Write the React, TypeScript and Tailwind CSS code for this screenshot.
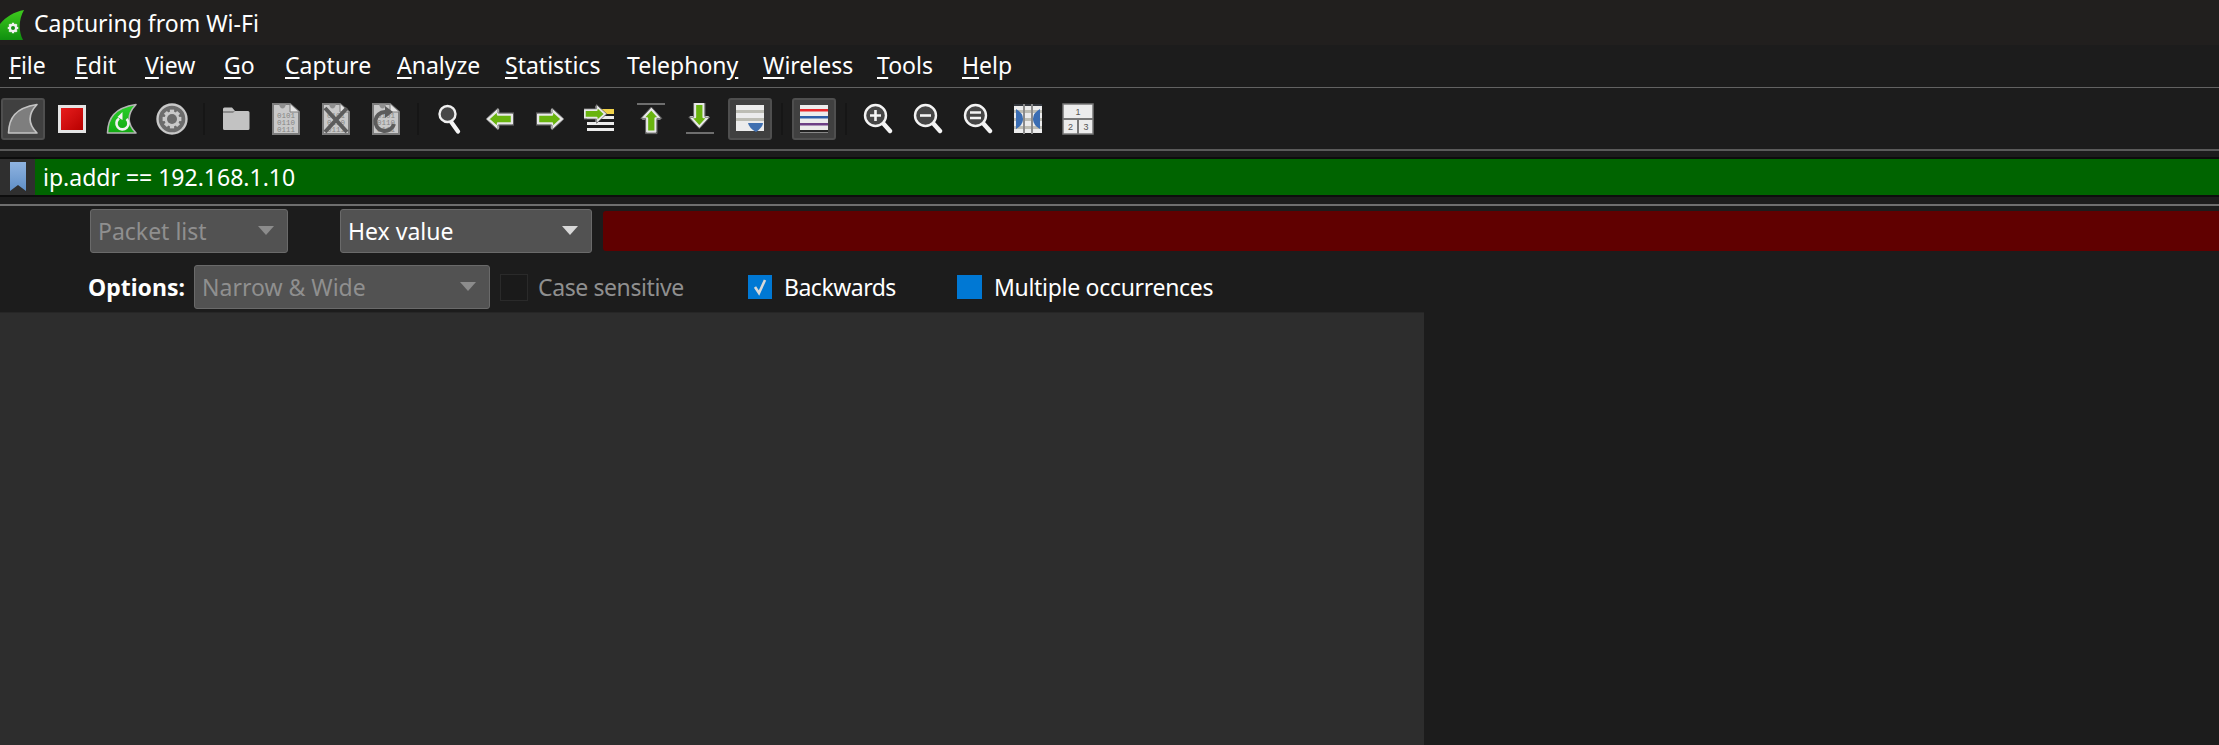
import type { ReactNode } from "react";

const FONT = "font-['Noto_Sans','Open_Sans',sans-serif]";

const MENUS: { label: string; key: number; width: string }[] = [
  { label: "File", key: 0, width: "w-[66px]" },
  { label: "Edit", key: 0, width: "w-[70px]" },
  { label: "View", key: 0, width: "w-[79px]" },
  { label: "Go", key: 0, width: "w-[61px]" },
  { label: "Capture", key: 0, width: "w-[112px]" },
  { label: "Analyze", key: 0, width: "w-[108px]" },
  { label: "Statistics", key: 0, width: "w-[122px]" },
  { label: "Telephony", key: 8, width: "w-[136px]" },
  { label: "Wireless", key: 0, width: "w-[114px]" },
  { label: "Tools", key: 0, width: "w-[85px]" },
  { label: "Help", key: 0, width: "w-[60px]" },
];

function Fin({ fill, stroke }: { fill: string; stroke: string }) {
  return (
    <path
      d="M1.5 30 C2 15 8 5 30 1.5 C21 11 21 21 30 30 Z"
      fill={fill}
      stroke={stroke}
      strokeWidth="1.6"
      strokeLinejoin="round"
    />
  );
}

function Icon({ children, w = 32, h = 32 }: { children: ReactNode; w?: number; h?: number }) {
  return (
    <svg width={w} height={h} viewBox={`0 0 ${w} ${h}`} className="block">
      {children}
    </svg>
  );
}

function GearPath({ cx, cy, r, fill }: { cx: number; cy: number; r: number; fill: string }) {
  const teeth = [0, 45, 90, 135];
  return (
    <g>
      {teeth.map((a) => (
        <rect
          key={a}
          x={cx - r * 0.28}
          y={cy - r * 1.25}
          width={r * 0.56}
          height={r * 2.5}
          fill={fill}
          transform={`rotate(${a} ${cx} ${cy})`}
        />
      ))}
      <circle cx={cx} cy={cy} r={r} fill={fill} />
    </g>
  );
}

function FileBase({ children }: { children?: ReactNode }) {
  return (
    <>
      <path d="M3 1 H20 L29 9 V31 H3 Z" fill="#c9c9c9" stroke="#7c7c7c" strokeWidth="2" />
      <path d="M20 1 V9 H29" fill="#e6e6e6" stroke="#7c7c7c" strokeWidth="1" />
      <path d="M9 1 C10 7 15 7 16 1 Z" fill="#8f8f8f" />
      <text x="16" y="15" textAnchor="middle" fontSize="7.5" fontFamily="Liberation Mono" fill="#858585">0101</text>
      <text x="16" y="22" textAnchor="middle" fontSize="7.5" fontFamily="Liberation Mono" fill="#858585">0110</text>
      <text x="16" y="29" textAnchor="middle" fontSize="7.5" fontFamily="Liberation Mono" fill="#858585">0111</text>
      {children}
    </>
  );
}

function Lens({ inner, children }: { inner: string; children?: ReactNode }) {
  return (
    <>
      <path d="M19 19 L27 28" stroke="#f4f4f4" strokeWidth="4.4" strokeLinecap="round" />
      <circle cx="12.5" cy="12.5" r="10.5" fill={inner} stroke="#f4f4f4" strokeWidth="2.4" />
      {children}
    </>
  );
}

function Arrow({ rotate = 0 }: { rotate?: number }) {
  return (
    <g transform={`rotate(${rotate} 14 14)`}>
      <path
        d="M2 14 L12 5 V9.5 H26 V18.5 H12 V23 Z"
        fill="#69b40f"
        stroke="#e8e8e8"
        strokeWidth="2.4"
        strokeLinejoin="round"
      />
      <path
        d="M0 14 L12 3 V8 H28 V20 H12 V25 Z"
        fill="none"
        stroke="#6e6e6e"
        strokeWidth="1"
        strokeLinejoin="round"
      />
    </g>
  );
}

function Tool({ children, active, wide }: { children: ReactNode; active?: boolean; wide?: boolean }) {
  return (
    <div className={`flex h-[42px] shrink-0 items-center justify-center ${wide ? "w-[47px] justify-start pl-px" : "w-[50px]"}`}>
      {active ? (
        <div className="flex h-[42px] w-[44px] items-center justify-center rounded-[3px] border-2 border-[#4f4f4f] bg-[#404040]">
          {children}
        </div>
      ) : (
        children
      )}
    </div>
  );
}

function Sep() {
  return (
    <div className="flex w-[14px] shrink-0 justify-center">
      <div className="h-[32px] w-[2px] bg-[#161616]" />
    </div>
  );
}

function Caret({ color }: { color: string }) {
  return (
    <svg width="16" height="10" viewBox="0 0 16 10" className="block shrink-0">
      <polygon points="0,0 16,0 8,9" fill={color} />
    </svg>
  );
}

function Combo({ label, width, disabled }: { label: string; width: string; disabled?: boolean }) {
  return (
    <div className={`flex h-[44px] shrink-0 items-center justify-between rounded-[3px] border border-[#6a6a6a] bg-[#525252] pl-[7px] pr-[13px] ${width}`}>
      <span className={disabled ? "text-[#8f8f8f]" : "text-white"}>{label}</span>
      <Caret color={disabled ? "#8c8c8c" : "#d8d8d8"} />
    </div>
  );
}

function Toolbar() {
  return (
    <div className="flex h-[61px] items-center">
      <Tool wide active>
        <Icon>
          <Fin fill="#7e7e7e" stroke="#c4c4c4" />
        </Icon>
      </Tool>
      <Tool>
        <div className="h-[28px] w-[28px] border-[3px] border-[#e4e4e4] bg-gradient-to-br from-[#e81c1c] to-[#b80000]" />
      </Tool>
      <Tool>
        <Icon>
          <defs>
            <linearGradient id="rst" x1="0" y1="0" x2="0" y2="1">
              <stop offset="0" stopColor="#2ad12a" />
              <stop offset="1" stopColor="#12a812" />
            </linearGradient>
          </defs>
          <Fin fill="url(#rst)" stroke="#b5b5b5" />
          <path d="M13 15.5 A6 6 0 1 0 20.5 16" fill="none" stroke="#f2f2f2" strokeWidth="2.6" />
          <polygon points="16.5,9 16.5,17 11.5,14" fill="#f2f2f2" />
        </Icon>
      </Tool>
      <Tool>
        <Icon>
          <circle cx="16" cy="16" r="14.5" fill="#6c6c6c" stroke="#c8c8c8" strokeWidth="2.4" />
          <GearPath cx={16} cy={16} r={7.5} fill="#c9c9c9" />
          <circle cx="16" cy="16" r="5" fill="#6c6c6c" />
        </Icon>
      </Tool>
      <Sep />
      <Tool>
        <Icon w={28} h={24}>
          <path d="M1 2 Q1 0.5 2.5 0.5 H10 L13 4 H26 Q27.5 4 27.5 5.5 V21.5 Q27.5 23 26 23 H2.5 Q1 23 1 21.5 Z" fill="#c2c2c2" />
          <path d="M1 6 H11 L13 4 H1 Z" fill="#8b8b8b" />
        </Icon>
      </Tool>
      <Tool>
        <Icon>
          <FileBase />
        </Icon>
      </Tool>
      <Tool>
        <Icon>
          <FileBase>
            <path d="M5 5 L27 29 M27 5 L5 29" stroke="#5c5c5c" strokeWidth="4" />
          </FileBase>
        </Icon>
      </Tool>
      <Tool>
        <Icon>
          <FileBase>
            <path d="M24 21 A9.5 9.5 0 1 1 15 9" fill="none" stroke="#5c5c5c" strokeWidth="4" />
            <polygon points="15,3 23,9 15,15" fill="#5c5c5c" />
          </FileBase>
        </Icon>
      </Tool>
      <Sep />
      <Tool>
        <Icon w={24} h={30}>
          <path d="M12.5 17 L20 27.5" stroke="#f4f4f4" strokeWidth="4.2" strokeLinecap="round" />
          <circle cx="9.5" cy="10" r="8" fill="#474747" stroke="#f0f0f0" strokeWidth="2.4" />
        </Icon>
      </Tool>
      <Tool>
        <Icon w={28} h={28}>
          <Arrow />
        </Icon>
      </Tool>
      <Tool>
        <Icon w={28} h={28}>
          <Arrow rotate={180} />
        </Icon>
      </Tool>
      <Tool>
        <Icon>
          <rect x="3" y="6" width="27" height="5" fill="#f0d24a" />
          <rect x="3" y="13" width="27" height="3" fill="#ececec" />
          <rect x="3" y="19" width="27" height="3" fill="#ececec" />
          <rect x="3" y="25" width="27" height="3" fill="#ececec" />
          <g transform="translate(-1 -1) scale(0.85)">
            <Arrow rotate={180} />
          </g>
        </Icon>
      </Tool>
      <Tool>
        <Icon>
          <rect x="3" y="0" width="28" height="2" fill="#6e6e6e" />
          <g transform="translate(4 4) scale(0.95)">
            <Arrow rotate={90} />
          </g>
        </Icon>
      </Tool>
      <Tool>
        <Icon>
          <rect x="2" y="29" width="28" height="2" fill="#6e6e6e" />
          <g transform="translate(2 -1) scale(0.95)">
            <Arrow rotate={270} />
          </g>
        </Icon>
      </Tool>
      <Tool active>
        <Icon w={28} h={28}>
          <rect width="28" height="26" fill="#ececec" />
          <rect y="5" width="28" height="3" fill="#bdbdb4" />
          <rect y="13" width="28" height="3" fill="#bdbdb4" />
          <path d="M12 18 H27 Q27 22 20 27 Q13 23 12 18 Z" fill="#3f6fb0" />
        </Icon>
      </Tool>
      <Sep />
      <Tool active>
        <Icon w={28} h={28}>
          <rect width="28" height="28" fill="#ececec" />
          <rect y="4" width="28" height="2.5" fill="#e8262b" />
          <rect y="11" width="28" height="2.5" fill="#2d5da8" />
          <rect y="18" width="28" height="2.5" fill="#6d3f86" />
          <rect y="25" width="28" height="2.5" fill="#222222" />
        </Icon>
      </Tool>
      <Sep />
      <Tool>
        <Icon w={30} h={32}>
          <Lens inner="#474747">
            <path d="M12.5 7 V18 M7 12.5 H18" stroke="#f4f4f4" strokeWidth="2.6" />
          </Lens>
        </Icon>
      </Tool>
      <Tool>
        <Icon w={30} h={32}>
          <Lens inner="#474747">
            <path d="M7 12.5 H18" stroke="#f4f4f4" strokeWidth="2.6" />
          </Lens>
        </Icon>
      </Tool>
      <Tool>
        <Icon w={30} h={32}>
          <Lens inner="#474747">
            <path d="M7 9.5 H18 M7 15 H18" stroke="#f4f4f4" strokeWidth="2.4" />
          </Lens>
        </Icon>
      </Tool>
      <Tool>
        <Icon w={28} h={30}>
          <rect y="1" width="28" height="28" fill="#ececec" />
          <rect y="0" width="28" height="2" fill="#33373d" />
          <rect y="6" width="28" height="3" fill="#bdbdb4" />
          <rect y="14" width="28" height="3" fill="#bdbdb4" />
          <rect y="22" width="28" height="3" fill="#bdbdb4" />
          <path d="M2 5 Q9 9 9 15 Q9 21 2 25 Z" fill="#3a6db3" />
          <path d="M26 5 Q19 9 19 15 Q19 21 26 25 Z" fill="#3a6db3" />
          <rect x="9" y="0" width="2" height="30" fill="#8c8c8c" />
          <rect x="17" y="0" width="2" height="30" fill="#8c8c8c" />
        </Icon>
      </Tool>
      <Tool>
        <Icon>
          <rect x="1" y="1" width="30" height="30" fill="#ececec" stroke="#777777" strokeWidth="1.5" />
          <path d="M1 16 H31 M16 16 V31" stroke="#777777" strokeWidth="2" />
          <text x="16" y="12" textAnchor="middle" fontSize="9" fontFamily="Liberation Sans" fill="#555555">1</text>
          <text x="8.5" y="27" textAnchor="middle" fontSize="9" fontFamily="Liberation Sans" fill="#555555">2</text>
          <text x="24" y="27" textAnchor="middle" fontSize="9" fontFamily="Liberation Sans" fill="#555555">3</text>
        </Icon>
      </Tool>
    </div>
  );
}

export default function App() {
  return (
    <div className={`flex h-[745px] w-[2219px] flex-col overflow-hidden bg-[#1c1c1c] text-[23px] text-white ${FONT}`}>
      <div className="flex h-[45px] shrink-0 items-center bg-[#211f1e] pt-[1px]">
        <svg width="26" height="32" viewBox="0 0 26 32" className="mt-[3px] block shrink-0">
          <defs>
            <linearGradient id="ttl" x1="0" y1="0" x2="0" y2="1">
              <stop offset="0" stopColor="#3fcb1e" />
              <stop offset="1" stopColor="#0f8f0f" />
            </linearGradient>
          </defs>
          <path d="M-7 31 C-5 16 8 4 24 1 C19 10 18 21 23 31 Z" fill="url(#ttl)" />
          <GearPath cx={13} cy={19} r={4.2} fill="#f2f2f2" />
          <circle cx="13" cy="19" r="2" fill="#168f14" />
        </svg>
        <span className="ml-[8px] whitespace-nowrap">Capturing from Wi-Fi</span>
      </div>

      <div className="flex h-[42px] shrink-0 items-center pb-[2px] pl-[9px]">
        {MENUS.map((m) => (
          <span key={m.label} className={`whitespace-nowrap ${m.width}`}>
            {m.label.slice(0, m.key)}
            <span className="underline underline-offset-[3px]">{m.label[m.key]}</span>
            {m.label.slice(m.key + 1)}
          </span>
        ))}
      </div>

      <div className="h-px shrink-0 bg-[#626262]" />
      <Toolbar />
      <div className="h-[2px] shrink-0 bg-[#5a5a5a]" />

      <div className="mt-[6px] flex h-[40px] shrink-0 border-y-2 border-[#0d0d0d]">
        <div className="flex w-[35px] shrink-0 items-center justify-center bg-[#2f2f2f]">
          <svg width="16" height="30" viewBox="0 0 16 30" className="block">
            <defs>
              <linearGradient id="bkm" x1="0" y1="0" x2="0" y2="1">
                <stop offset="0" stopColor="#8fb3e0" />
                <stop offset="1" stopColor="#5f8fc7" />
              </linearGradient>
            </defs>
            <path d="M0 0 H16 V29 L8 23 L0 29 Z" fill="url(#bkm)" />
          </svg>
        </div>
        <div className="flex flex-1 items-center bg-[#006400] pl-[8px]">ip.addr == 192.168.1.10</div>
      </div>

      <div className="mt-[7px] h-[2px] shrink-0 bg-[#6e6e6e]" />

      <div className="mt-[3px] flex h-[44px] shrink-0 items-center pl-[90px]">
        <Combo label="Packet list" width="w-[198px]" disabled />
        <div className="ml-[52px]">
          <Combo label="Hex value" width="w-[252px]" />
        </div>
        <div className="ml-[11px] h-[40px] flex-1 rounded-l-[3px] bg-[#600000]" />
      </div>

      <div className="mt-[12px] flex h-[44px] shrink-0 items-center pl-[88px]">
        <span className="w-[106px] font-bold">Options:</span>
        <Combo label="Narrow & Wide" width="w-[296px]" disabled />
        <div className="ml-[10px] h-[27px] w-[28px] border border-[#2a2a2a] bg-[#1a1a1a]" />
        <span className="ml-[10px] w-[210px] tracking-[-0.4px] text-[#8f8f8f]">Case sensitive</span>
        <div className="flex h-[24px] w-[24px] items-center justify-center bg-[#0078d4]">
          <svg width="14" height="18" viewBox="0 0 14 18" className="block">
            <path d="M2 9 L6 15 L12 2" fill="none" stroke="#d8d8d8" strokeWidth="2.6" />
          </svg>
        </div>
        <span className="ml-[12px] w-[173px] tracking-[-0.5px]">Backwards</span>
        <div className="h-[24px] w-[25px] bg-[#0078d4]" />
        <span className="ml-[12px] tracking-[-0.3px]">Multiple occurrences</span>
      </div>

      <div className="mt-[3px] w-[1424px] flex-1 border-t border-[#262626] bg-[#2d2d2d]" />
    </div>
  );
}
